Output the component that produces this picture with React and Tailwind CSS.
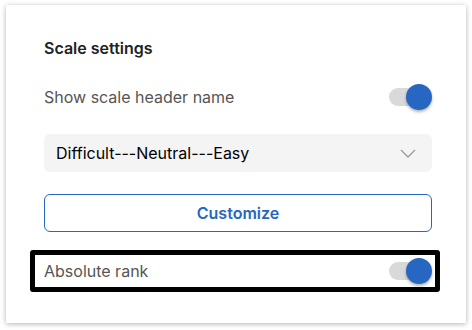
import React, { useState } from 'react';

function Toggle({ on, onChange }) {
    return (
        <button
            type="button"
            onClick={() => onChange(!on)}
            className="relative w-[43px] h-[26px] shrink-0"
        >
            <span className="absolute left-0 top-[4px] w-[36px] h-[18px] rounded-full bg-[#d9d9d9]" />
            <span
                className={`absolute top-0 w-[26px] h-[26px] rounded-full shadow-[0_2px_3px_rgba(0,0,0,0.3)] ${
                    on ? 'left-[17px] bg-[#2767c1]' : 'left-0 bg-white'
                }`}
            />
        </button>
    );
}

function App() {
    const [showHeader, setShowHeader] = useState(true);
    const [absoluteRank, setAbsoluteRank] = useState(true);

    return (
        <div className="w-[472px] h-[330px] bg-white font-['Inter',sans-serif] pt-[5px] pl-[6px]">
            <div className="w-[460px] h-[318px] bg-white shadow-[0_1px_5px_rgba(0,0,0,0.3)] pl-[38px] pr-[34px] pt-[33px]">
                {/* Header */}
                <h2 className="text-[16px] leading-[20px] font-semibold text-[#222]">Scale settings</h2>

                <div className="mt-[26px] flex items-center justify-between h-[26px]">
                    <span className="text-[16px] text-[#555]">Show scale header name</span>
                    <Toggle on={showHeader} onChange={setShowHeader} />
                </div>

                {/* Scale select */}
                <div className="mt-[24px] h-[38px] rounded-[6px] bg-[#f4f4f4] flex items-center justify-between pl-[12px] pr-[16px]">
                    <span className="text-[16px] text-black">Difficult---Neutral---Easy</span>
                    <svg width="16" height="9" viewBox="0 0 16 9" fill="none">
                        <path d="M1 1l7 7 7-7" stroke="#9a9a9a" strokeWidth="1.3" />
                    </svg>
                </div>

                <button className="mt-[22px] w-full h-[38px] rounded-[6px] border border-[#2767c1] text-[#2767c1] text-[16px] font-semibold">
                    Customize
                </button>

                {/* Highlighted row */}
                <div className="mt-[18px] -ml-[14px] -mr-[8px] h-[42px] border-[5px] border-black rounded-[3px] flex items-center justify-between pl-[9px] pr-[3px]">
                    <span className="text-[16px] text-[#555]">Absolute rank</span>
                    <Toggle on={absoluteRank} onChange={setAbsoluteRank} />
                </div>
            </div>
        </div>
    );
}

export default App;
